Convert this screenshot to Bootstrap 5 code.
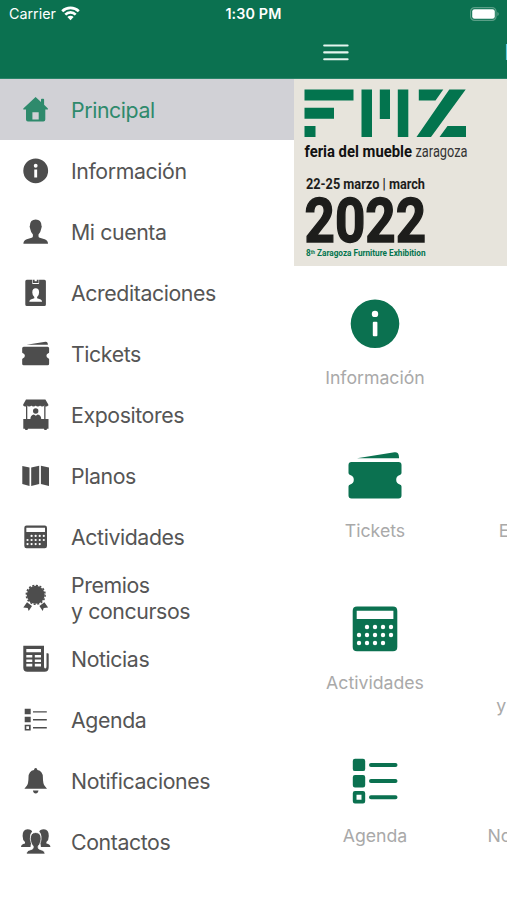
<!DOCTYPE html>
<html lang="es">
<head>
<meta charset="utf-8">
<meta name="viewport" content="width=device-width, initial-scale=1">
<title>Feria del Mueble Zaragoza</title>
<link href="https://cdn.jsdelivr.net/npm/bootstrap@5.3.0/dist/css/bootstrap.min.css" rel="stylesheet">
<style>
  :root { --fmz-green: #0b7150; }
  body { font-family: Inter, "Liberation Sans", sans-serif; width: 507px; height: 900px; background: #fff; }
  .top-area { height: 79px; background: var(--fmz-green); border-bottom: 1px solid #2b8469; }
  .status-line { height: 27px; padding: 0 8px 0 9px; display: grid; grid-template-columns: 1fr auto 1fr; font-size: 14.3px; }
  .status-line .clock { font-weight: 600; font-size: 14.3px; letter-spacing: .15px; margin-left: -1px; }
  .tool-line { height: 51px; padding-left: 323px; }
  .app-title { font-size: 21px; margin-left: 155.5px; white-space: nowrap; line-height: 1; color: #d5ece3; -webkit-font-smoothing: antialiased; }
  .side-menu { width: 294px; flex: none; }
  .menu-row { height: 61.08px; padding: 0 0 0 18px; gap: 17px; color: #555; font-size: 21.3px; line-height: 26px; letter-spacing: -.4px; text-decoration: none; }
  .menu-row svg { width: 36px; height: 36px; flex: none; fill: currentColor; color: #4d4d4d; }
  .menu-row.current, .menu-row.current svg { color: #2e8a6c; }
  .menu-row.current { background: #d1d1d6; }
  .page { width: 213px; flex: none; }
  .banner { display: block; width: 213px; height: 187px; }
  .tiles { display: grid; grid-template-columns: 162px 183px; grid-auto-rows: 152.4px; width: 345px; padding-top: 28px; }
  .tile { color: #a9a9a9; font-size: 17.7px; line-height: 23px; text-align: center; }
  .tile svg { width: 60px; height: 60px; fill: var(--fmz-green); display: block; margin: 0 auto 12.4px; }
</style>
</head>
<body class="overflow-hidden">
<svg class="d-none" xmlns="http://www.w3.org/2000/svg">
  <symbol id="i-info" viewBox="0 0 60 60"><path fill-rule="evenodd" d="M30 5.500a24.300 24.300 0 1 0 0 48.600a24.300 24.300 0 1 0 0-48.600zM30 16.700a3.200 3.200 0 1 1 0 6.400a3.200 3.200 0 1 1 0-6.400zM28.800 27.700h2.600a1 1 0 0 1 1 1v12.500a1 1 0 0 1-1 1h-2.600a1 1 0 0 1-1-1V28.700a1 1 0 0 1 1-1z"/></symbol>
  <symbol id="i-ticket" viewBox="0 0 60 60"><path d="M12 12.200L49.500 6.200q3.600-.5 4.300 3.200l.3 2.800zM6.500 16h47q3 0 3 3v8q0 1.500-1.700 2a5 5 0 0 0 0 9.600q1.700.6 1.700 2V49.500q0 3-3 3h-47q-3 0-3-3V40.600q0-1.400 1.700-2a5 5 0 0 0 0-9.600q-1.700-.5-1.700-2V19q0-3 3-3z"/></symbol>
  <symbol id="i-calc" viewBox="0 0 60 60"><path fill-rule="evenodd" d="M12 7.600h36q4.300 0 4.300 4.300v36q0 4.300-4.300 4.300H12q-4.300 0-4.300-4.300v-36q0-4.300 4.300-4.300zM11.700 11.700v8.400h36.700v-8.400z"/><g fill="#fff"><circle cx="22" cy="28" r="2.200"/><circle cx="30" cy="28" r="2.200"/><circle cx="38" cy="28" r="2.200"/><circle cx="46" cy="28" r="2.200"/><circle cx="14" cy="36" r="2.200"/><circle cx="22" cy="36" r="2.200"/><circle cx="30" cy="36" r="2.200"/><circle cx="38" cy="36" r="2.200"/><circle cx="46" cy="36" r="2.200"/><circle cx="14" cy="44" r="2.200"/><circle cx="22" cy="44" r="2.200"/><circle cx="30" cy="44" r="2.200"/><circle cx="38" cy="44" r="2.200"/></g></symbol>
  <symbol id="i-agenda" viewBox="0 0 60 60"><path fill-rule="evenodd" d="M10 7.700h8q2.200 0 2.200 2.200v8q0 2.200-2.200 2.200h-8q-2.200 0-2.200-2.200v-8q0-2.200 2.200-2.200zM10 24h8q2.200 0 2.200 2.200v8q0 2.200-2.200 2.200h-8q-2.200 0-2.200-2.200v-8q0-2.200 2.200-2.200zM10 40h8q2.200 0 2.200 2.200v8q0 2.200-2.200 2.200h-8q-2.200 0-2.200-2.200v-8q0-2.200 2.200-2.200zM11.500 43.700v5h5v-5zM26 11.900h24.500a2 2 0 0 1 0 4H26a2 2 0 0 1 0-4zM26 28.100h24.500a2 2 0 0 1 0 4H26a2 2 0 0 1 0-4zM26 44.200h24.500a2 2 0 0 1 0 4H26a2 2 0 0 1 0-4z"/></symbol>
</svg>

<header class="top-area text-white d-flex flex-column">
  <div class="status-line align-items-center">
    <div class="d-flex align-items-center">
      <span>Carrier</span>
      <svg class="ms-1" width="21" height="15" viewBox="0 0 21 15" fill="none" stroke="#fff" stroke-width="2.700"><path d="M2.200 5.300a12 12 0 0 1 16.600 0M5.300 8.600a7.400 7.400 0 0 1 10.400 0"/><path d="M10.500 14.200L7.400 11.100a4.400 4.400 0 0 1 6.200 0z" fill="#fff" stroke="none"/></svg>
    </div>
    <span class="clock">1:30 PM</span>
    <svg class="ms-auto" width="29" height="14" viewBox="0 0 29 14"><rect x=".6" y=".6" width="25.400" height="12.800" rx="4" fill="none" stroke="#5a9f87" stroke-width="1.200"/><rect x="2.200" y="2.200" width="22.600" height="9.600" rx="2.300" fill="#fff"/><path d="M27.300 5v4q1.500-.7 1.500-2t-1.500-2z" fill="#5a9f87"/></svg>
  </div>
  <div class="tool-line d-flex align-items-center">
    <svg class="flex-shrink-0" width="26" height="18" viewBox="0 0 26 18" stroke="#e4f5ee" stroke-width="2.100" stroke-linecap="round"><path d="M1.200 1.500h23.400M1.200 8.400h23.400M1.200 15.200h23.400"/></svg>
    <span class="app-title">FMZ</span>
  </div>
</header>

<div class="d-flex">
  <nav class="side-menu d-flex flex-column">
    <a class="menu-row current d-flex align-items-center"><svg viewBox="0 0 36 36"><path fill-rule="evenodd" d="M17.600 5L23 10V7.600q0-.8.800-.8h1.500q.8 0 .8.800v5.200l3.800 3.600v1h-2.600v10q0 2-2 2H10q-2 0-2-2v-10H5.300v-1zM14.400 20.300v7.200h6.300v-7.200z"/></svg><span>Principal</span></a>
    <a class="menu-row d-flex align-items-center"><svg viewBox="0 0 60 60"><path fill-rule="evenodd" d="M29.500 9a20.700 20.700 0 1 0 0 41.400a20.700 20.700 0 1 0 0-41.400zM29.500 18a3.200 3.200 0 1 1 0 6.400a3.200 3.200 0 1 1 0-6.400zM27.100 27.500h4.800v13.500h-4.800z"/></svg><span>Información</span></a>
    <a class="menu-row d-flex align-items-center"><svg viewBox="0 0 36 36"><path d="M17.700 5.600q5.600 0 5.800 6.200l.3.700-.8 3q-.5 3.200-2.500 5v1.800q0 1 1.200 1.500l5 1.500q3.300 1.400 3.300 4.500H5.400q0-3.100 3.300-4.500l5-1.500q1.200-.5 1.200-1.500v-1.800q-2-1.800-2.500-5l-.8-3 .3-.7q.2-6.200 5.800-6.200z"/></svg><span>Mi cuenta</span></a>
    <a class="menu-row d-flex align-items-center"><svg viewBox="0 0 36 36"><path fill-rule="evenodd" d="M8.800 4.700h5.400v3.500q0 .7.700.7h5.500q.7 0 .7-.7V4.700h5.300q1.500 0 1.500 1.500v23.400q0 1.500-1.500 1.500H8.800q-1.500 0-1.500-1.500V6.200q0-1.500 1.500-1.500zM17.700 13.300q-3.400 0-3.400 4.200 0 2.800 2 4.600v1.200l-3.600 1.200q-1.400.7-1.400 2.300h12.800q0-1.600-1.400-2.300l-3.600-1.200v-1.200q2-1.800 2-4.600 0-4.200-3.400-4.200z"/><path d="M14.800 4.700h1.800v1.500h2.200V4.700h1.800v3.400h-5.800z"/></svg><span>Acreditaciones</span></a>
    <a class="menu-row d-flex align-items-center"><svg viewBox="0 0 36 36"><use href="#i-ticket" x="2.400" y="2.600" width="30.500" height="30.500"/></svg><span>Tickets</span></a>
    <a class="menu-row d-flex align-items-center"><svg viewBox="0 0 36 36"><path d="M8 2.600h19.400l2.900 4.800v1.300H5.200V7.400zM5.500 8.500h24.400q-.3 1.100-1.700 1.100t-1.900-1q-.5 1-2.100 1t-2.100-1q-.6 1-2.200 1t-2.200-1q-.6 1-2.200 1t-2.200-1q-.5 1-2.100 1t-2.100-1q-.5 1-1.900 1t-1.700-1.100zM8 9h1.300v13H8zM26.200 9h1.300v13h-1.300zM5.300 22h7.100q0-4 3.500-4.500l1.900 1.200 1.900-1.200q3.500.5 3.500 4.500h7.300v9.700H29l-.5 1.300h-2l-.6-1.300H10l-.6 1.300h-2l-.5-1.300H5.300z"/><circle cx="17.700" cy="14" r="2.700"/></svg><span>Expositores</span></a>
    <a class="menu-row d-flex align-items-center"><svg viewBox="0 0 36 36"><path d="M4.300 8l7.200 1.500v18.400l-7.200-2zM13.200 9.400l8-1.700v18.200l-8 2.200zM22.900 7.700l8.100 1.900v18.400l-8.100-2.100z"/></svg><span>Planos</span></a>
    <a class="menu-row d-flex align-items-center"><svg viewBox="0 0 36 36"><use href="#i-calc" x="2.400" y="2.700" width="30.500" height="30.500"/></svg><span>Actividades</span></a>
    <a class="menu-row d-flex align-items-center"><svg viewBox="0 0 36 36"><circle cx="17.700" cy="14.800" r="9"/><circle cx="17.700" cy="14.800" r="9.400" fill="none" stroke="currentColor" stroke-width="1.500" stroke-dasharray="2 1.690"/><path d="M9 22.300l5 3.700-3.300 4.900-1-2.900-4.400-.6zM26.400 22.300l-5 3.700 3.300 4.900 1-2.900 4.400-.6z"/></svg><span>Premios<br>y concursos</span></a>
    <a class="menu-row d-flex align-items-center"><svg viewBox="0 0 36 36"><path fill-rule="evenodd" d="M5.300 4.700H26v20.500q0 2.400 1.200 2.400 1.300 0 1.300-2.400V12.300h1.200q1 0 1 1v12.900q0 4.500-4.200 4.500H9.300q-4 0-4-4zM8.300 8v3.200H23V8zM8.300 14v2.600h6V14zM16.800 14v2.600H23V14zM8.300 18.400V21h6v-2.600zM16.800 18.400V21H23v-2.600zM8.300 22.800v2.800h6v-2.800zM16.800 22.800v2.800H23v-2.800z"/></svg><span>Noticias</span></a>
    <a class="menu-row d-flex align-items-center"><svg viewBox="0 0 36 36"><path fill-rule="evenodd" d="M6.700 6.700h6v5.600h-6zM6.700 14.700h6v5.600h-6zM6.700 22.700h6v5.900h-6zM8.300 24.300v2.600h2.700v-2.600zM15 9.200h13.800v1.300H15zM15 17.100h13.800v1.300H15zM15 25.100h13.800v1.300H15z"/></svg><span>Agenda</span></a>
    <a class="menu-row d-flex align-items-center"><svg viewBox="0 0 36 36"><path d="M17.700 5q1.500 0 1.700 2 5.500 1 5.500 7.500 0 6.500 1.900 8.500l2.200 2.700H6.400l2.200-2.700q1.900-2 1.900-8.500 0-6.500 5.500-7.500.2-2 1.700-2zM14.900 27.500h5.600q-.5 3-2.800 3t-2.800-3z"/></svg><span>Notificaciones</span></a>
    <a class="menu-row d-flex align-items-center"><svg viewBox="0 0 36 36"><path d="M9.500 5.300q4.300 0 4.600 2.500-2.600 2.500-1.800 6l1.200 5q-1 1.400-1 4.300H3q0-3 4-3.700v-1.300Q4.600 16.300 4.600 12q0-6.700 4.900-6.700z"/><path d="M25.900 5.300q-4.300 0-4.600 2.500 2.600 2.500 1.800 6l-1.200 5q1 1.400 1 4.300h9.500q0-3-4-3.700v-1.300q2.400-1.800 2.400-6.100 0-6.700-4.900-6.700z"/><path d="M17.700 8.500q5.400 0 5.400 6.400l-.5 2.800q-.6 2.800-2.400 4.500v1.600q0 1 1.200 1.400l3.400 1.200q2.300 1 2.300 3.700H8.300q0-2.700 2.300-3.700l3.400-1.200q1.200-.4 1.200-1.400v-1.600q-1.800-1.700-2.400-4.500l-.5-2.800q0-6.400 5.400-6.400z" stroke="#fff" stroke-width=".8"/></svg><span>Contactos</span></a>
  </nav>

  <main class="page">
    <svg class="banner" viewBox="294 79 213 187" font-family="Roboto, sans-serif">
      <rect x="294" y="79" width="213" height="187" fill="#e7e4dc"/>
      <g fill="#03744e">
        <path d="M304.500 89.500h49v11h-49zM304.500 107.800h29.500v11h-29.500zM304.500 126h11v11h-11zM361.500 89.500h10.500v47.500h-10.500zM379.800 89.500h10.200v29.500h-10.200zM397.800 89.500h10.500v47.500h-10.500zM418.800 89.500h24.500l-7.800 11h-16.700zM449.300 89.500h16.400l-34.700 47.500h-14.500zM447.500 126h18.500v11h-26.500z"/>
      </g>
      <g fill="#1d1d1b">
        <text x="304.500" y="157.300" font-size="15.800" font-weight="700" fill="#111" textLength="107.500" lengthAdjust="spacingAndGlyphs">feria del mueble</text>
        <text x="415.500" y="157.300" font-size="15.800" font-weight="400" fill="#333" textLength="52" lengthAdjust="spacingAndGlyphs">zaragoza</text>
        <text x="306" y="188.500" font-size="14" font-weight="700" textLength="119" lengthAdjust="spacingAndGlyphs">22-25 marzo | march</text>
        <text x="304.600" y="241.700" font-size="62" font-weight="700" stroke="#1d1d1b" stroke-width="1.500" textLength="121.500" lengthAdjust="spacingAndGlyphs">2022</text>
      </g>
      <text x="306" y="256" font-size="8.500" font-weight="700" fill="#03744e" textLength="119.500" lengthAdjust="spacingAndGlyphs">8<tspan font-size="5" dy="-2.500">th</tspan><tspan dy="2.500"> Zaragoza Furniture Exhibition</tspan></text>
    </svg>
    <div class="tiles">
      <div class="tile"><svg><use href="#i-info"/></svg>Información</div>
      <div class="tile"></div>
      <div class="tile"><svg><use href="#i-ticket"/></svg>Tickets</div>
      <div class="tile"><svg></svg>Expositores</div>
      <div class="tile"><svg><use href="#i-calc"/></svg>Actividades</div>
      <div class="tile"><svg></svg>Premios<br>y concursos</div>
      <div class="tile"><svg><use href="#i-agenda"/></svg>Agenda</div>
      <div class="tile"><svg></svg>Notificaciones</div>
    </div>
  </main>
</div>
<script src="https://cdn.jsdelivr.net/npm/bootstrap@5.3.0/dist/js/bootstrap.bundle.min.js"></script>
</body>
</html>
